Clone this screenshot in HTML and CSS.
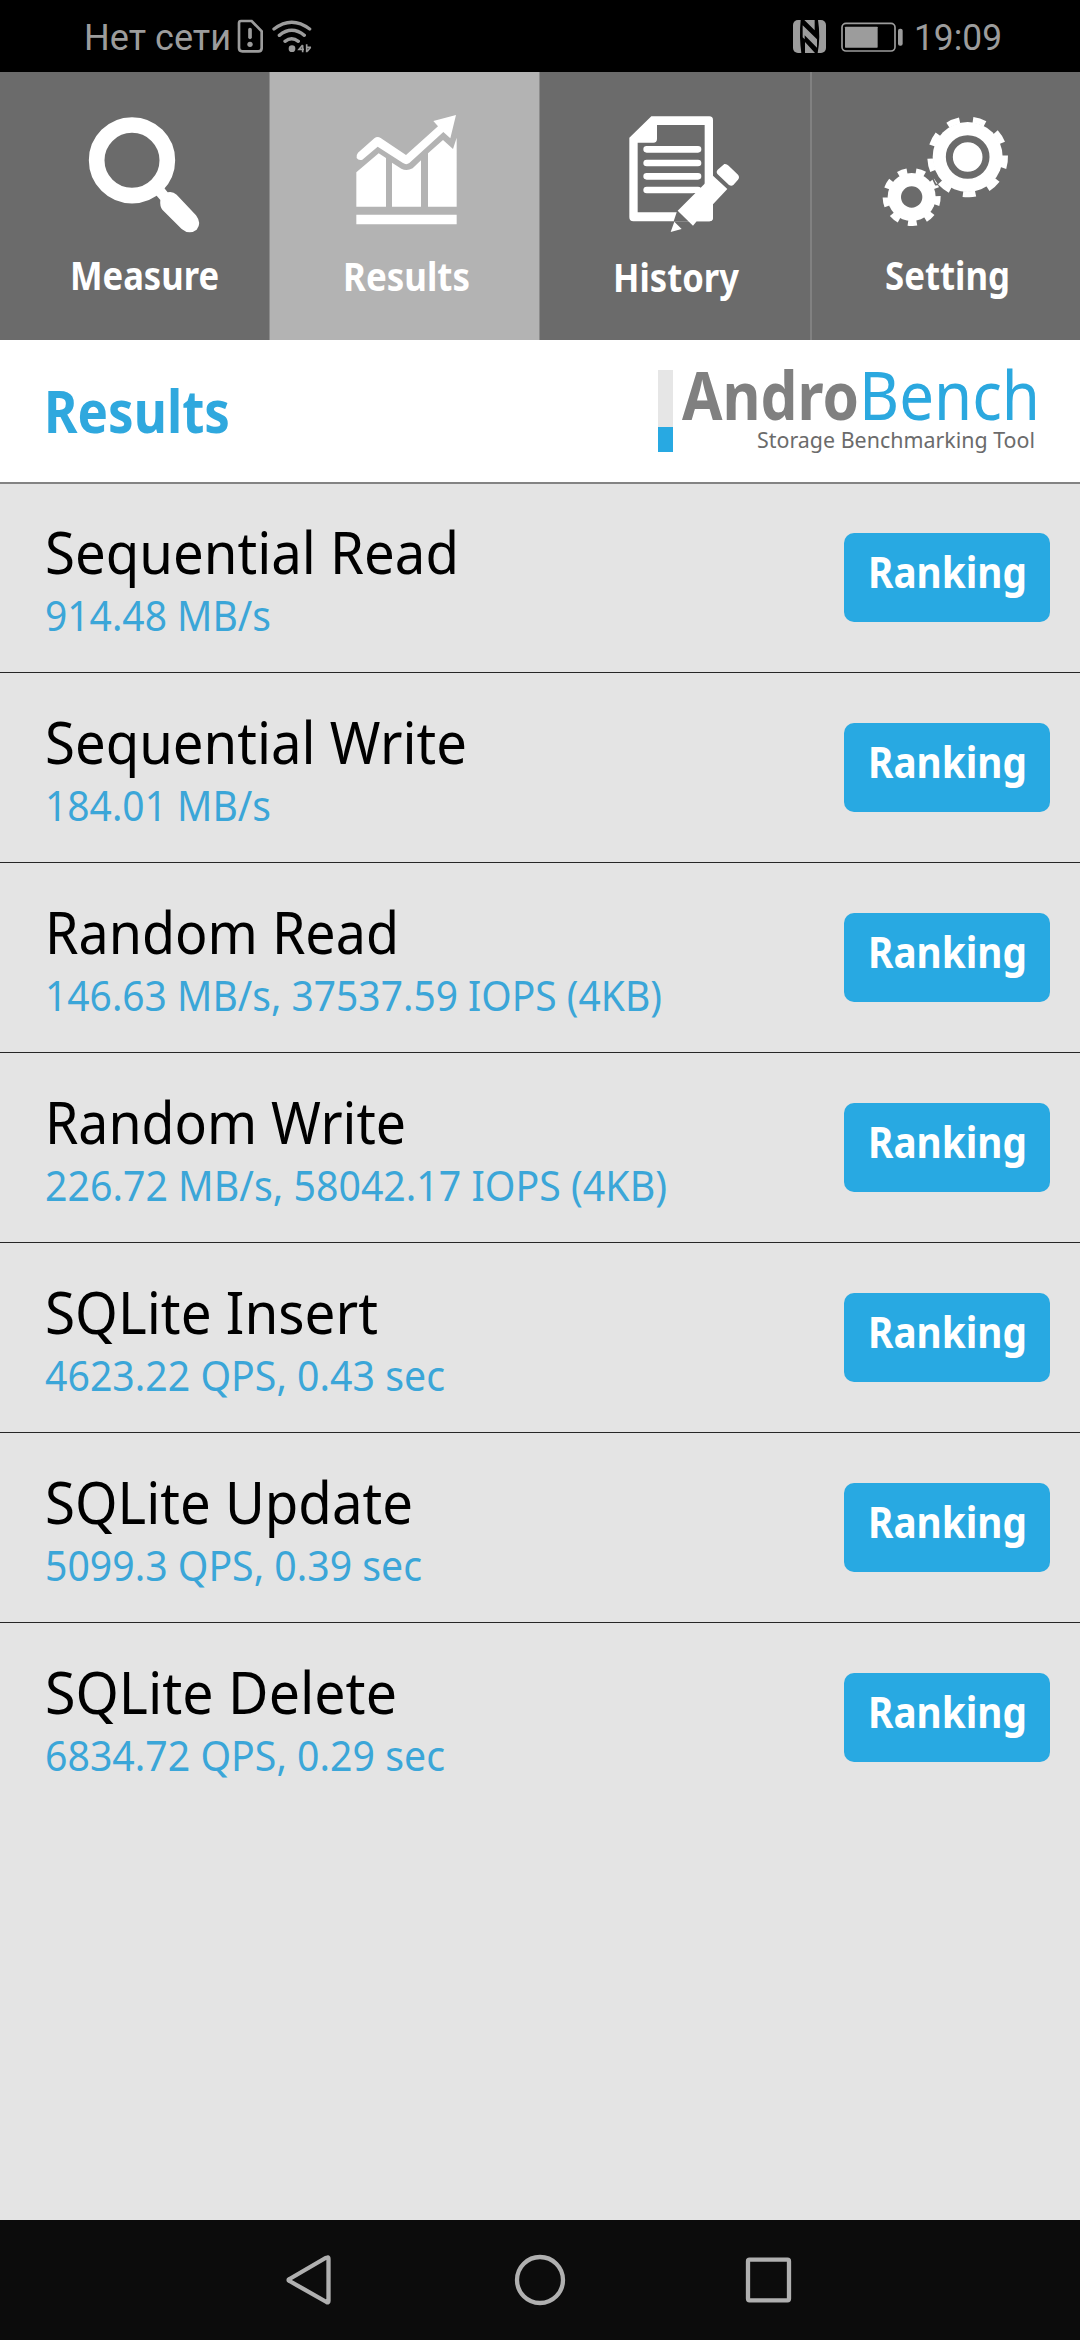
FILE: index.html
```html
<!DOCTYPE html>
<html lang="en">
<head>
<meta charset="utf-8">
<title>AndroBench</title>
<link rel="stylesheet" href="styles.css">
</head>
<body>
<div class="screen">
  <div class="status">
    <span class="status-text" data-w="147">Нет сети</span>
    <svg class="sim" viewBox="530 55 80 102"><path d="M542 61H574L604 92V142Q604 152 594 152H546Q536 152 536 142V67Q536 61 542 61Z" fill="none" stroke="#9c9c9c" stroke-width="8"/><path d="M569 87V110" stroke="#9c9c9c" stroke-width="11" stroke-linecap="round"/><circle cx="569" cy="131" r="8" fill="#9c9c9c"/></svg>
    <svg class="wifi" viewBox="637 55 120 102"><g fill="none" stroke="#9c9c9c" stroke-width="10" stroke-linecap="round"><path d="M643 85Q696 44 750 85M659 104Q696 74 734 104M676 122Q696 106 716 122"/></g><circle cx="697" cy="144" r="10" fill="#9c9c9c"/><path d="M729 133L718 146H733M729 134V155M741 131V155M741 140H754M753 140L743 152" fill="none" stroke="#9c9c9c" stroke-width="5"/></svg>
    <svg class="nfc" viewBox="69 60 99 99"><rect x="69" y="60" width="99" height="99" rx="15" fill="#9c9c9c"/><path d="M92 60H103L134 91V60H144Q152 110 143 159H135L105 126V159H94Q87 110 92 60Z" fill="#000"/><path d="M98 76L141 118V143L104 106V118L98 112Z" fill="#9c9c9c"/></svg>
    <svg class="battery" viewBox="214 64 186 90"><rect x="217" y="68" width="159" height="83" rx="12" fill="none" stroke="#9c9c9c" stroke-width="5"/><rect x="226" y="78" width="98" height="63" rx="2" fill="#9c9c9c"/><rect x="385" y="84" width="14" height="51" rx="6" fill="#9c9c9c"/></svg>
    <span class="clock" data-w="88">19:09</span>
  </div>

  <nav class="tabs">
    <div class="tab">
      <svg class="tab-icon" viewBox="0 120 810 390"><circle cx="396" cy="271" r="106" fill="none" stroke="#fff" stroke-width="47"/><path d="M468 375L492 353L503 367Q518 363 530 374L588 436Q606 460 590 479Q568 496 545 477L487 419Q479 409 481 390Z" fill="#fff"/></svg>
      <span class="tab-label measure" data-w="149">Measure</span>
    </div>
    <div class="tab active">
      <svg class="tab-icon" viewBox="30 120 810 390"><g fill="#fff"><path d="M289 434H590V463H289ZM289 307L356 250L378 264V410H289ZM396 278L424 296Q440 304 458 295L483 271V410H396ZM504 250L549 210L579 237L590 203V410H504Z"/><path d="M520 153L588 135L571 205L550 186L448 279Q439 286 429 279L353 230L307 269Q296 273 290 264Q288 255 294 248L343 205Q352 198 362 204L438 255L534 169Z"/></g></svg>
      <span class="tab-label results" data-w="127">Results</span>
    </div>
    <div class="tab">
      <svg class="tab-icon" viewBox="0 120 810 390"><path fill="#fff" fill-rule="evenodd" d="M334 139H508Q519 139 519 150V442Q519 454 508 454H280Q268 454 268 442V203ZM351 165V207Q351 218 340 218H293V427H494V165Z"/><path d="M320 238H474M320 279H474M320 319H474M320 360H474" stroke="#fff" stroke-width="20" stroke-linecap="round"/><path fill="#6b6b6b" d="M460 370H490V425H470V454H401L411 424Z"/><path fill="#fff" d="M519 317L562 357L519 403V442Q519 454 508 454H470L459 467L413 422L494 341ZM403 455L425 477L392 486ZM553 282Q560 281 566 287L594 314Q600 321 594 329L580 345Q574 350 567 345L533 313Q527 306 533 299Z"/></svg>
      <span class="tab-label history" data-w="126">History</span>
    </div>
    <div class="tab">
      <svg class="tab-icon" viewBox="30 120 810 390"><g fill="#fff"><circle cx="503" cy="261" r="105"/><circle cx="335" cy="381" r="72"/></g><g fill="none" stroke="#fff"><circle cx="503" cy="261" r="112" stroke-width="18" stroke-dasharray="38 40.19" transform="rotate(-2.3 503 261)"/><circle cx="335" cy="381" r="78" stroke-width="18" stroke-dasharray="27 27.454" transform="rotate(-2 335 381)"/></g><circle cx="503" cy="261" r="55" fill="none" stroke="#6b6b6b" stroke-width="21"/><circle cx="335" cy="381" r="32" fill="#6b6b6b"/><path d="M393 314L407 344L414 343" fill="none" stroke="#6b6b6b" stroke-width="5"/></svg>
      <span class="tab-label setting" data-w="125">Setting</span>
    </div>
  </nav>

  <header class="header">
    <h1 class="heading" data-w="186">Results</h1>
    <div class="logo">
      <div class="logo-bar"></div>
      <div class="logo-text">
        <div class="logo-name"><span class="andro" data-w="177">Andro</span><span class="bench" data-w="181">Bench</span></div>
        <div class="logo-sub" data-w="278">Storage Benchmarking Tool</div>
      </div>
    </div>
  </header>

  <main class="list">
    <div class="row"><div><div class="name" data-w="414">Sequential Read</div><div class="value" data-w="226">914.48 MB/s</div></div><div class="button"><span data-w="159">Ranking</span></div></div>
    <div class="row"><div><div class="name" data-w="422">Sequential Write</div><div class="value" data-w="226">184.01 MB/s</div></div><div class="button"><span data-w="159">Ranking</span></div></div>
    <div class="row"><div><div class="name" data-w="354">Random Read</div><div class="value" data-w="617">146.63 MB/s, 37537.59 IOPS (4KB)</div></div><div class="button"><span data-w="159">Ranking</span></div></div>
    <div class="row"><div><div class="name" data-w="361">Random Write</div><div class="value" data-w="622">226.72 MB/s, 58042.17 IOPS (4KB)</div></div><div class="button"><span data-w="159">Ranking</span></div></div>
    <div class="row"><div><div class="name" data-w="333">SQLite Insert</div><div class="value" data-w="400">4623.22 QPS, 0.43 sec</div></div><div class="button"><span data-w="159">Ranking</span></div></div>
    <div class="row"><div><div class="name" data-w="368">SQLite Update</div><div class="value" data-w="377">5099.3 QPS, 0.39 sec</div></div><div class="button"><span data-w="159">Ranking</span></div></div>
    <div class="row"><div><div class="name" data-w="352">SQLite Delete</div><div class="value" data-w="400">6834.72 QPS, 0.29 sec</div></div><div class="button"><span data-w="159">Ranking</span></div></div>
  </main>

  <footer class="navbar">
    <svg viewBox="0 0 60 60"><path d="M40 7.5Q41 7 41 9V51Q41 53 39 52L2 31Q0 30 2 29L38 8Z" transform="translate(6.5 0)" fill="none" stroke="#b0b0b0" stroke-width="4.3" stroke-linejoin="round"/></svg>
    <svg viewBox="0 0 60 60"><circle cx="30" cy="30" r="23" fill="none" stroke="#b0b0b0" stroke-width="4.3"/></svg>
    <svg viewBox="0 0 60 60"><rect x="9" y="9.7" width="41" height="40.6" rx="1.5" fill="none" stroke="#b0b0b0" stroke-width="4.3"/></svg>
  </footer>
</div>
<script src="fit.js"></script>
</body>
</html>
```
FILE: styles.css
```css
* { box-sizing: border-box; }
body { margin: 0; background: #e4e4e4; font-family: "Noto Sans", sans-serif; }
.screen { width: 1080px; height: 2340px; display: flex; flex-direction: column; overflow: hidden; background: #e4e4e4; }
svg { display: block; flex: none; }
[data-w] { display: block; width: max-content; white-space: nowrap; transform-origin: 0 50%; }

.status { height: 72px; flex: none; display: flex; align-items: center; padding-left: 83.5px; background: #000; color: #9c9c9c; font-family: Roboto, sans-serif; font-size: 36px; line-height: 42px; }
.status-text { margin-top: 3px; }
.sim { width: 26.7px; height: 34px; margin-left: 6px; }
.wifi { width: 40px; height: 34px; margin-left: 9px; }
.nfc { width: 33px; height: 33px; margin: 1px 0 0 481px; }
.battery { width: 62px; height: 30px; margin: 1px 0 0 15px; }
.clock { margin: 3px 0 0 11px; }

.tabs { height: 268px; flex: none; display: grid; grid-template-columns: repeat(4, 270px); background: #6b6b6b; }
.tab { display: flex; flex-direction: column; align-items: center; padding-top: 38px; color: #fff; }
.tab.active { background: #b3b3b3; box-shadow: -1px 0 #8c8c8c, inset -1px 0 #8c8c8c; }
.tab:last-child { background: linear-gradient(90deg, #818181 2px, transparent 2px); }
.tab-icon { width: 270px; height: 130px; }
.tab-label { font-size: 40px; line-height: 54px; font-weight: 700; margin-top: 8px; }
.tab-label.measure { margin-left: 19px; }
.tab-label.results { margin-left: 3px; margin-top: 9px; }
.tab-label.history { margin-left: 2px; margin-top: 10px; }
.tab-label.setting { margin-left: 5px; }

.header { height: 144px; flex: none; display: flex; justify-content: space-between; padding: 0 43px 0 44px; background: #fff; border-bottom: 2px solid #838383; }
.heading { margin: 30px 0 0; font-size: 59px; line-height: 80px; font-weight: 700; color: #2fa8de; }
.logo { display: flex; padding-top: 30px; gap: 9px; }
.logo-bar { width: 15px; height: 82px; background: linear-gradient(#e6e6e6 57px, #28a9e2 57px); }
.logo-text { width: 355px; }
.logo-name { display: flex; font-size: 67px; line-height: 70px; margin-top: -11px; }
.andro { font-weight: 700; color: #808080; }
.bench { color: #2ba8df; }
.logo-sub { font-size: 22px; line-height: 30px; margin: -5.5px 0 0 75px; color: #6b6b6b; }

.list { flex: 1; }
.row { height: 190px; display: flex; justify-content: space-between; padding: 0 30px 0 44.5px; border-bottom: 1px solid #262626; }
.row:first-child { height: 189px; }
.row:last-child { border-bottom: 0; }
.name { margin-top: 36px; font-size: 59px; line-height: 64px; color: #000; }
.row:first-child .name { margin-top: 35px; }
.value { margin-top: 8px; font-size: 41px; line-height: 48px; color: #3ba6d8; }
.button { width: 206px; height: 89px; margin-top: 50px; padding: 8px 0 0 24px; border-radius: 10px; background: #28a9e2; color: #fff; font-size: 43.5px; line-height: 61px; font-weight: 700; }
.row:first-child .button { margin-top: 49px; }

.navbar { height: 120px; flex: none; display: flex; align-items: center; justify-content: center; gap: 169px; background: #0c0c0c; }
.navbar svg { width: 60px; height: 60px; }
```
FILE: fit.js
```js
// Condense each label horizontally to the width of its column in the design.
document.querySelectorAll("[data-w]").forEach(function (el) {
  var natural = el.getBoundingClientRect().width;
  var target = parseFloat(el.dataset.w);
  el.style.transform = "scaleX(" + target / natural + ")";
  el.style.marginRight = target - natural + "px";
});
```
